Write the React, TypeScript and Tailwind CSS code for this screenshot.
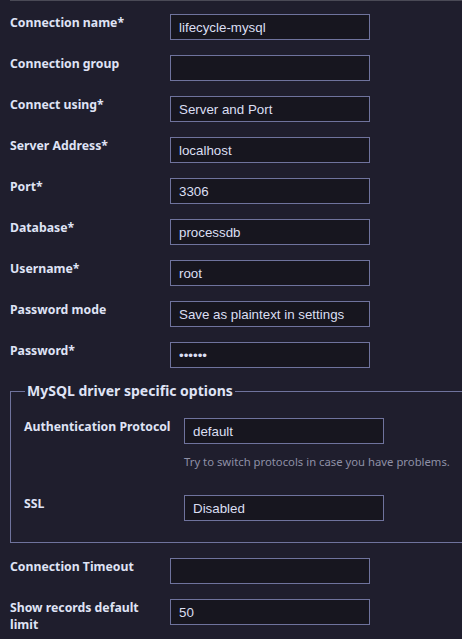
import React from 'react'

const labelCls =
  "block w-[160px] shrink-0 pr-[4px] text-[12.25px] leading-[17px] font-bold text-[#dfe3f5] [font-family:'Noto_Sans',sans-serif]"
const inputCls =
  "w-[200px] h-[26px] shrink-0 px-[8px] bg-[#17161f] border border-[#6f739d] text-[13.33px] text-[#dbdff2] [font-family:'Liberation_Sans',Arial,sans-serif] outline-none"

function Row({ label, value, type = 'text', hint }: { label: string; value: string; type?: string; hint?: string }) {
  return (
    <div className="flex items-start">
      <label className={labelCls}>{label}</label>
      <div className="flex flex-col">
        <input type={type} defaultValue={value} readOnly className={inputCls} />
        {hint && (
          <div className="pt-[10px] pb-[10px] text-[11.3px] leading-[16px] text-[#8e90a6] whitespace-nowrap [font-family:'Noto_Sans',sans-serif]">
            {hint}
          </div>
        )}
      </div>
    </div>
  )
}

export default function App() {
  return (
    <div className="min-h-screen bg-[#1f1e2d] overflow-hidden">
      <div className="ml-[10px] border-t border-[#4a4a56] pt-[13px] flex flex-col gap-[15px]">
        <Row label="Connection name*" value="lifecycle-mysql" />
        <Row label="Connection group" value="" />
        <Row label="Connect using*" value="Server and Port" />
        <Row label="Server Address*" value="localhost" />
        <Row label="Port*" value="3306" />
        <Row label="Database*" value="processdb" />
        <Row label="Username*" value="root" />
        <Row label="Password mode" value="Save as plaintext in settings" />
        <Row label="Password*" value="secret" type="password" />

        <fieldset className="-mt-[2px] w-[470px] border border-[#6f739d] pl-[13px] pt-[17px] pb-[21px]">
          <legend className="ml-[1px] px-[2px] text-[14px] leading-[20px] font-bold text-[#dfe3f5] [font-family:'Noto_Sans',sans-serif]">
            MySQL driver specific options
          </legend>
          <div className="flex flex-col gap-[15px]">
            <Row
              label="Authentication Protocol"
              value="default"
              hint="Try to switch protocols in case you have problems."
            />
            <Row label="SSL" value="Disabled" />
          </div>
        </fieldset>

        <Row label="Connection Timeout" value="" />
        <Row label="Show records default limit" value="50" />
      </div>
    </div>
  )
}
